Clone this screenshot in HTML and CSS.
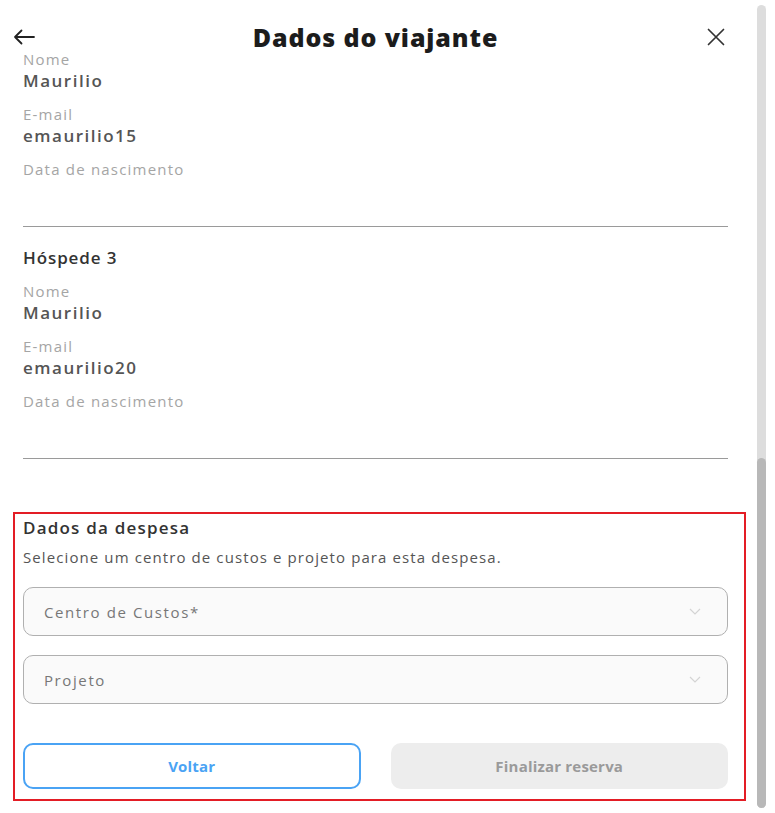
FILE: index.html
```html
<!DOCTYPE html>
<html lang="pt-BR">
<head>
<meta charset="utf-8">
<title>Dados do viajante</title>
<link rel="stylesheet" href="styles.css">
</head>
<body>
<div class="app">
  <div class="panel">
    <header class="header">
      <button class="icon-btn" aria-label="Voltar">
        <svg width="22" height="16" viewBox="0 0 22 16"><path d="M21 8H2M8.5 1.5L2 8l6.5 6.5" fill="none" stroke="#222" stroke-width="1.8" stroke-linecap="round" stroke-linejoin="round"/></svg>
      </button>
      <h1 class="title">Dados do viajante</h1>
      <button class="icon-btn close" aria-label="Fechar">
        <svg width="18" height="18" viewBox="0 0 18 18"><path d="M1.5 1.5l15 15M16.5 1.5l-15 15" fill="none" stroke="#333" stroke-width="1.7" stroke-linecap="round"/></svg>
      </button>
    </header>

    <section class="guest first">
      <div class="field"><div class="label">Nome</div><div class="value">Maurilio</div></div>
      <div class="field"><div class="label">E-mail</div><div class="value">emaurilio15</div></div>
      <div class="field"><div class="label">Data de nascimento</div><div class="value"></div></div>
    </section>

    <section class="guest">
      <h2 class="guest-title">Hóspede 3</h2>
      <div class="field"><div class="label">Nome</div><div class="value">Maurilio</div></div>
      <div class="field"><div class="label">E-mail</div><div class="value">emaurilio20</div></div>
      <div class="field"><div class="label">Data de nascimento</div><div class="value"></div></div>
    </section>

    <section class="expense">
      <h2 class="expense-title">Dados da despesa</h2>
      <p class="expense-desc">Selecione um centro de custos e projeto para esta despesa.</p>
      <div class="select">
        <span>Centro de Custos*</span>
        <svg width="12" height="7" viewBox="0 0 12 7"><path d="M1 1l5 5 5-5" fill="none" stroke="#d4d4d4" stroke-width="1.2"/></svg>
      </div>
      <div class="select">
        <span>Projeto</span>
        <svg width="12" height="7" viewBox="0 0 12 7"><path d="M1 1l5 5 5-5" fill="none" stroke="#d4d4d4" stroke-width="1.2"/></svg>
      </div>
      <div class="actions">
        <button class="btn btn-outline">Voltar</button>
        <button class="btn btn-disabled">Finalizar reserva</button>
      </div>
    </section>
  </div>
  <div class="scrollbar"><div class="thumb"></div></div>
</div>
</body>
</html>
```

FILE: styles.css
```css
* { box-sizing: border-box; }
html, body { margin: 0; padding: 0; background: #fff; }
body {
  font-family: "Open Sans", "Liberation Sans", sans-serif;
  color: #333;
  width: 775px;
  height: 813px;
  overflow: hidden;
}
.app {
  display: flex;
  height: 813px;
}
.panel {
  width: 751px;
  padding: 0 23px 0 23px;
  display: flex;
  flex-direction: column;
}
.header {
  display: grid;
  grid-template-columns: 40px 1fr 40px;
  align-items: center;
  height: 49px;
  padding-top: 25px;
  margin: 0 -10px 0 -10px;
}
.icon-btn {
  background: none;
  border: 0;
  padding: 0;
  height: 24px;
  display: flex;
  align-items: center;
  cursor: pointer;
}
.icon-btn.close { justify-content: flex-end; padding-right: 13px; }
.title {
  margin: 0;
  text-align: center;
  font-size: 25px;
  line-height: 24px;
  font-weight: 800;
  color: #1c1c1c;
  letter-spacing: 0.9px;
}
.guest {
  border-bottom: 1px solid #9a9a9a;
  padding-bottom: 12px;
}
.guest:not(.first) { padding-top: 19px; }
.guest-title {
  margin: 0 0 11px;
  font-size: 17px;
  line-height: 24px;
  font-weight: 600;
  color: #333;
  letter-spacing: 0.9px;
}
.field { margin-bottom: 11px; }
.label {
  font-size: 15px;
  line-height: 20px;
  color: #a5a5a5;
  letter-spacing: 1.2px;
}
.value {
  font-size: 17px;
  line-height: 24px;
  height: 24px;
  font-weight: 600;
  color: #555;
  letter-spacing: 1.5px;
}
.expense {
  margin: 53px -18px 0 -10px;
  padding: 2px 16px 10px 8px;
  border: 2px solid #e31d25;
}
.expense-title {
  margin: 0;
  font-size: 17px;
  line-height: 24px;
  font-weight: 600;
  color: #333;
  letter-spacing: 1.2px;
}
.expense-desc {
  margin: 7px 0 20px;
  font-size: 15px;
  line-height: 20px;
  color: #555;
  letter-spacing: 1.1px;
}
.select {
  height: 49px;
  border: 1px solid #b0b0b0;
  border-radius: 10px;
  background: #fafafa;
  display: flex;
  align-items: center;
  justify-content: space-between;
  padding: 0 26px 0 20px;
  font-size: 15px;
  color: #777;
  letter-spacing: 1.6px;
  margin-bottom: 19px;
}
.select + .select { margin-bottom: 39px; }
.actions {
  display: grid;
  grid-template-columns: 1fr 1fr;
  gap: 30px;
}
.btn {
  height: 46px;
  border-radius: 10px;
  font-family: inherit;
  font-size: 15px;
  font-weight: 700;
  letter-spacing: 0.2px;
}
.btn-outline {
  background: #fff;
  border: 2px solid #4aa3f4;
  color: #4aa3f4;
}
.btn-disabled {
  background: #ededed;
  border: 0;
  color: #9a9a9a;
}
.scrollbar {
  width: 9px;
  margin: 5px 0 5px 6px;
  background: #dddddd;
  border-radius: 5px;
  display: flex;
  flex-direction: column;
  justify-content: flex-end;
}
.thumb {
  height: 350px;
  background: #b8b8b8;
  border-radius: 5px;
}
```
